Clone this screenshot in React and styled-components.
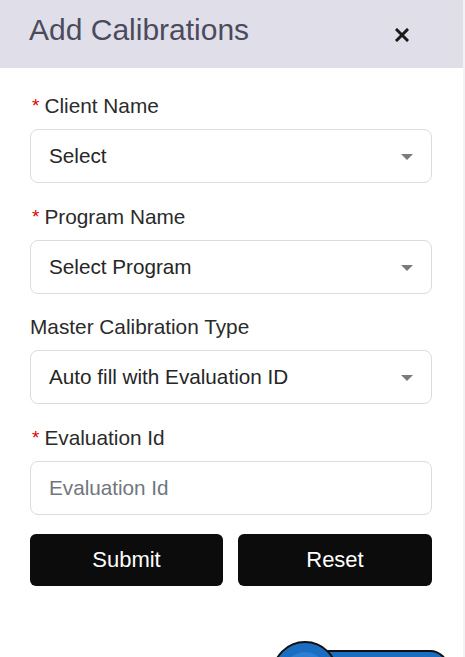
import React from "react";
import styled, { createGlobalStyle } from "styled-components";

const GlobalStyle = createGlobalStyle`
  html, body {
    margin: 0;
    padding: 0;
    background: #f3f3f5;
    font-family: "Liberation Sans", Arial, sans-serif;
    overflow: hidden;
  }
`;

const Panel = styled.div`
  position: relative;
  width: 463px;
  height: 657px;
  background: #ffffff;
  overflow: hidden;
`;

const Header = styled.div`
  height: 68px;
  background: #e0dfe9;
  display: flex;
  align-items: center;
  justify-content: space-between;
  padding: 0 52px 0 29px;
  box-sizing: border-box;
`;

const Title = styled.h2`
  margin: 0 0 8px 0;
  font-size: 30px;
  font-weight: 400;
  color: #4b4b5c;
`;

const CloseButton = styled.button`
  border: none;
  background: none;
  padding: 0;
  width: 18px;
  height: 18px;
  display: flex;
  align-items: center;
  justify-content: center;
  margin-top: 2px;
  cursor: pointer;
`;

const Form = styled.form`
  display: flex;
  flex-direction: column;
  padding: 26px 31px 0 30px;
  box-sizing: border-box;
`;

const Field = styled.div`
  display: flex;
  flex-direction: column;
  gap: 11px;
  margin-bottom: 21.7px;
`;

const Label = styled.label`
  font-size: 20.8px;
  color: #2b2b2b;
  line-height: 24px;
  display: flex;
  align-items: center;
  gap: 5px;
`;

const Star = styled.span`
  color: #e00000;
  font-size: 19px;
  padding-left: 2px;
`;

const Box = styled.div`
  position: relative;
  height: 54px;
  border: 1px solid #d8dde1;
  border-radius: 8px;
  box-sizing: border-box;
  display: flex;
  align-items: center;
  padding: 0 18px;
  font-size: 20.7px;
  color: ${({ $placeholder }) => ($placeholder ? "#6f767d" : "#262626")};
`;

const Caret = styled.span`
  position: absolute;
  right: 18px;
  top: 24px;
  width: 0;
  height: 0;
  border-left: 6px solid transparent;
  border-right: 6px solid transparent;
  border-top: 6px solid #7b7b7b;
`;

const Buttons = styled.div`
  display: grid;
  grid-template-columns: 193px 194px;
  gap: 15px;
  margin-top: -3px;
`;

const Button = styled.button`
  height: 52px;
  border: none;
  border-radius: 6px;
  background: #0c0c0c;
  color: #ffffff;
  font-family: "Liberation Sans", Arial, sans-serif;
  font-size: 22px;
  cursor: pointer;
`;

const Widget = styled.svg`
  position: absolute;
  left: 268px;
  top: 638px;
`;

const fields = [
  { label: "Client Name", required: true, value: "Select", select: true },
  { label: "Program Name", required: true, value: "Select Program", select: true },
  { label: "Master Calibration Type", required: false, value: "Auto fill with Evaluation ID", select: true },
  { label: "Evaluation Id", required: true, value: "Evaluation Id", select: false },
];

export default function App() {
  return (
    <>
      <GlobalStyle />
      <Panel>
        <Header>
          <Title>Add Calibrations</Title>
          <CloseButton aria-label="close">
            <svg width="14" height="14" viewBox="0 0 14 14">
              <path d="M2 2 L12 12 M12 2 L2 12" stroke="#1a1a1a" strokeWidth="3" strokeLinecap="square" />
            </svg>
          </CloseButton>
        </Header>
        <Form>
          {fields.map((f) => (
            <Field key={f.label}>
              <Label>
                {f.required && <Star>*</Star>}
                {f.label}
              </Label>
              <Box $placeholder={!f.select}>
                {f.value}
                {f.select && <Caret />}
              </Box>
            </Field>
          ))}
          <Buttons>
            <Button type="button">Submit</Button>
            <Button type="button">Reset</Button>
          </Buttons>
        </Form>
        <Widget width="190" height="30" viewBox="0 0 190 30">
          <rect x="30" y="13" width="150" height="40" rx="18" fill="#1a6ec2" stroke="#111" strokeWidth="2" />
          <circle cx="37" cy="36" r="32" fill="#1a6ec2" stroke="#111" strokeWidth="2" />
          <circle cx="37" cy="36" r="22" fill="#2a7fd0" />
        </Widget>
      </Panel>
    </>
  );
}
